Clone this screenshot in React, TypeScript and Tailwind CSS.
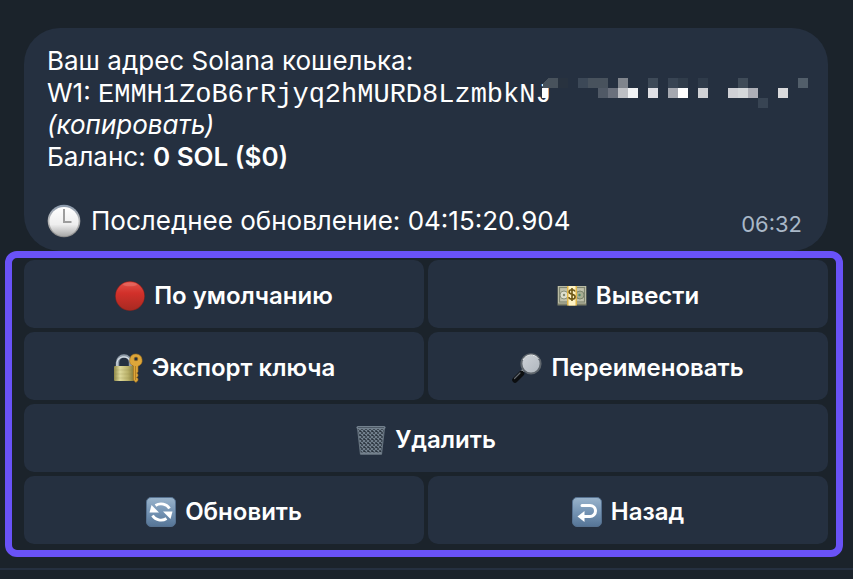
import type { ReactNode } from "react";

function ClockIcon() {
  return (
    <svg width="34" height="34" viewBox="0 0 34 34" aria-hidden="true" className="shrink-0">
      <defs>
        <linearGradient id="clockRim" x1="0" y1="0" x2="0" y2="1">
          <stop offset="0" stopColor="#8b9aad" />
          <stop offset="0.5" stopColor="#b9b9b9" />
          <stop offset="1" stopColor="#8a8a8a" />
        </linearGradient>
        <linearGradient id="clockFace" x1="0" y1="0" x2="0" y2="1">
          <stop offset="0" stopColor="#ffffff" />
          <stop offset="0.6" stopColor="#eeeeee" />
          <stop offset="1" stopColor="#a9a9a9" />
        </linearGradient>
      </defs>
      <circle cx="17" cy="17" r="16.3" fill="url(#clockRim)" />
      <circle cx="17" cy="17.6" r="14.6" fill="url(#clockFace)" />
      <path d="M17 5v13h7.500" fill="none" stroke="#9d9d9d" strokeWidth="2" />
    </svg>
  );
}

function RedCircleIcon() {
  return (
    <svg width="30" height="30" viewBox="0 0 30 30" aria-hidden="true">
      <defs>
        <linearGradient id="redBall" x1="0" y1="0" x2="0" y2="1">
          <stop offset="0" stopColor="#e0524a" />
          <stop offset="0.4" stopColor="#d2302a" />
          <stop offset="1" stopColor="#a82a22" />
        </linearGradient>
      </defs>
      <circle cx="15" cy="15" r="14.8" fill="#8f231d" />
      <circle cx="15" cy="15" r="14.2" fill="url(#redBall)" />
      <ellipse cx="15" cy="3.500" rx="7" ry="1.800" fill="#f08a80" opacity="0.4" />
    </svg>
  );
}

function MoneyIcon() {
  return (
    <svg width="30" height="30" viewBox="0 0 30 30" aria-hidden="true">
      <rect x="0.500" y="5" width="29" height="19.500" fill="#7d7f69" />
      <rect x="1" y="5" width="28" height="17.500" fill="#bfc0aa" />
      <rect x="2.500" y="6.500" width="25" height="14.500" fill="none" stroke="#808571" strokeWidth="1.200" />
      <circle cx="7" cy="14" r="4" fill="#dedfce" stroke="#8c927b" />
      <circle cx="23" cy="14" r="4" fill="#a8ad93" stroke="#7c856c" />
      <circle cx="7" cy="14" r="1.200" fill="#81886f" />
      <circle cx="22.500" cy="14" r="1.200" fill="#4b8a65" />
      <rect x="10" y="5" width="10" height="19.500" fill="#e0b64a" />
      <rect x="11.500" y="5" width="7" height="19.500" fill="#fff3c4" />
      <path d="M18 10.500c-.5-1.200-1.500-1.700-3-1.700-1.700 0-2.900.8-2.900 2.200 0 3.200 6 1.400 6 4.800 0 1.500-1.300 2.400-3.100 2.400-1.700 0-2.900-.7-3.200-2.100M15 7v13" fill="none" stroke="#6b5515" strokeWidth="1.600" />
    </svg>
  );
}

function LockKeyIcon() {
  return (
    <svg width="30" height="30" viewBox="0 0 30 30" aria-hidden="true">
      <defs>
        <linearGradient id="lockBody" x1="0" y1="0" x2="1" y2="0">
          <stop offset="0" stopColor="#8f8848" />
          <stop offset="0.3" stopColor="#ded99b" />
          <stop offset="0.7" stopColor="#b9b068" />
          <stop offset="1" stopColor="#857a38" />
        </linearGradient>
      </defs>
      <path d="M4.500 14V9.500a6.500 6.500 0 0 1 13 0V14" fill="none" stroke="#8e9aa6" strokeWidth="3.400" />
      <path d="M4 14V9.500a7 7 0 0 1 13 -2" fill="none" stroke="#d8e0e8" strokeWidth="1.200" />
      <rect x="1" y="13" width="20" height="15" rx="1" fill="url(#lockBody)" />
      <path d="M1.500 17h19M1.500 21h19M1.500 25h19" stroke="#8b8344" strokeWidth="0.500" opacity="0.400" />
      <path fillRule="evenodd" d="M23 1a6.300 6.300 0 0 0-2.500 12.100V27l2.300 2.500 2.200-2v-2l-1.500-1 1.500-1.200v-2l-1.300-1.200 1.300-1V13.200A6.300 6.300 0 0 0 23 1Zm0 3a1.900 1.900 0 1 1 0 3.800A1.900 1.900 0 0 1 23 4Z" fill="#dda63a" stroke="#a8741d" strokeWidth="0.600" />
      <path d="M22.500 13v14" stroke="#a8741d" strokeWidth="0.800" />
    </svg>
  );
}

function MagnifierIcon() {
  return (
    <svg width="30" height="30" viewBox="0 0 30 30" aria-hidden="true">
      <defs>
        <linearGradient id="lens" x1="0" y1="0" x2="1" y2="1">
          <stop offset="0" stopColor="#cfd3d8" />
          <stop offset="1" stopColor="#aeb5bd" />
        </linearGradient>
      </defs>
      <path d="M9.500 19 13 15.500" stroke="#aab0b6" strokeWidth="3" />
      <path d="M3 27 9.500 20.500" stroke="#0c0e10" strokeWidth="5.500" strokeLinecap="round" />
      <path d="M2.500 25.500 8 20" stroke="#63696f" strokeWidth="1.200" strokeLinecap="round" />
      <circle cx="19" cy="10.800" r="9.600" fill="url(#lens)" stroke="#5f666d" strokeWidth="2" />
      <path d="M11 7a9 9 0 0 1 15.500-1" fill="none" stroke="#f2f4f6" strokeWidth="1" />
    </svg>
  );
}

function TrashIcon() {
  return (
    <svg width="30" height="30" viewBox="0 0 30 30" aria-hidden="true">
      <defs>
        <pattern id="mesh" width="4" height="4" patternUnits="userSpaceOnUse">
          <rect width="4" height="4" fill="#29323c" />
          <path d="M0 0 4 4M4 0 0 4" stroke="#74828f" strokeWidth="1.100" />
        </pattern>
      </defs>
      <path d="M1.500 2.500h27l-3 26.500h-21Z" fill="url(#mesh)" stroke="#64717d" strokeWidth="1.200" />
      <path d="M4.500 28.500h21" stroke="#74818d" strokeWidth="2" />
      <rect x="0.500" y="1" width="29" height="3" rx="1.500" fill="#73818e" />
      <path d="M2 2.500h26" stroke="#46525e" strokeWidth="0.800" />
    </svg>
  );
}

function BlueTile({ id, children }: { id: string; children: ReactNode }) {
  return (
    <svg width="30" height="30" viewBox="0 0 30 30" aria-hidden="true">
      <defs>
        <linearGradient id={id} x1="0" y1="0" x2="0" y2="1">
          <stop offset="0" stopColor="#9ab4cc" />
          <stop offset="0.500" stopColor="#7594b4" />
          <stop offset="1" stopColor="#557496" />
        </linearGradient>
      </defs>
      <rect x="0.500" y="0.500" width="29" height="29" rx="4.500" fill={`url(#${id})`} stroke="#567190" />
      {children}
    </svg>
  );
}

function RefreshIcon() {
  return (
    <BlueTile id="refreshTile">
      <path d="M9.500 8.500A9.500 8.500 0 0 1 23.500 11.500" fill="none" stroke="#fff" strokeWidth="2.800" />
      <path d="M20.500 21.500A9.500 8.500 0 0 1 6.500 18.500" fill="none" stroke="#fff" strokeWidth="2.800" />
      <path d="M3.500 15.500 5.500 8 13 15.500Z" fill="#fff" />
      <path d="M26.500 14.500 24.500 22 17 14.500Z" fill="#fff" />
    </BlueTile>
  );
}

function ReturnIcon() {
  return (
    <BlueTile id="returnTile">
      <path d="M10 8.500H18a5.500 5.500 0 0 1 0 11h-6" fill="none" stroke="#fff" strokeWidth="3" strokeLinecap="round" />
      <path d="M5.500 19.500 12.500 14v11Z" fill="#fff" />
    </BlueTile>
  );
}

type Cell = [x: number, y: number, color: string];

const mosaic: Cell[] = [
  [16, 0, "#28323f"], [36, 0, "#3c4857"], [46, 0, "#48525d"], [56, 0, "#48525d"],
  [76, 0, "#80858d"], [106, 0, "#3e4a58"], [126, 0, "#384453"], [136, 0, "#303c4a"],
  [156, 0, "#2f3b4a"], [196, 0, "#3f4b58"], [256, 0, "#525e6a"],
  [56, 10, "#505966"], [66, 10, "#6a707c"], [76, 10, "#bdbfc4"], [86, 10, "#f1f2f4"],
  [106, 10, "#e0e0e5"], [126, 10, "#a5a8b0"], [136, 10, "#ffffff"], [156, 10, "#d0d1d5"],
  [186, 10, "#cfd0d5"], [196, 10, "#d5d8db"], [206, 10, "#adafb7"], [236, 10, "#dadadc"],
  [216, 20, "#384453"],
];

function AddressMosaic() {
  return (
    <svg width="266" height="30" viewBox="0 0 266 30" shapeRendering="crispEdges" aria-hidden="true" className="absolute top-[50px] left-[518px]">
      <path d="M6 0h10v10H1V5Z" fill="#48525c" />
      <rect x="0" y="10" width="6" height="10" fill="#ffffff" />
      {mosaic.map(([x, y, color]) => (
        <rect key={`${x}-${y}`} x={x} y={y} width="10" height="10" fill={color} />
      ))}
    </svg>
  );
}

function KeyboardButton({ icon, label, wide = false }: { icon: ReactNode; label: string; wide?: boolean }) {
  return (
    <button
      type="button"
      className={`flex h-[68px] items-center justify-center gap-[9px] rounded-[10px] bg-[#253040] pt-[3px] text-2xl font-semibold text-white ${wide ? "col-span-2" : ""}`}
    >
      {icon}
      <span>{label}</span>
    </button>
  );
}

export default function App() {
  return (
    <main className="min-h-screen bg-[#1b232b] pt-7 font-['Inter','Liberation_Sans',sans-serif] text-white">
      <article className="relative mr-[25px] ml-6 rounded-[36px] bg-[#253040] px-[23px] pt-[17px] pb-[14px] text-[26px] leading-8">
        <p>Ваш адрес Solana кошелька:</p>
        <p className="whitespace-nowrap">
          W1: <code className="font-['Liberation_Mono',monospace] text-[27px] leading-none">EMMH1ZoB6rRjyq2hMURD8LzmbkNJ</code>
        </p>
        <p className="italic">(копировать)</p>
        <p>
          Баланс: <strong className="font-semibold">0 SOL ($0)</strong>
        </p>
        <div className="mt-8 flex h-8 items-center gap-[10px]">
          <ClockIcon />
          <p className="whitespace-nowrap">Последнее обновление: 04:15:20.904</p>
          <time className="ml-auto pt-[6px] pr-[3px] text-[22px] text-[#a9b8c8]">06:32</time>
        </div>
        <AddressMosaic />
      </article>

      <section aria-label="Действия" className="mr-[10px] ml-[5px] rounded-xl border-[7px] border-[#6952f7] pt-[2px] pr-2 pb-[6px] pl-3">
        <div className="grid grid-cols-2 gap-1">
          <KeyboardButton icon={<RedCircleIcon />} label="По умолчанию" />
          <KeyboardButton icon={<MoneyIcon />} label="Вывести" />
          <KeyboardButton icon={<LockKeyIcon />} label="Экспорт ключа" />
          <KeyboardButton icon={<MagnifierIcon />} label="Переименовать" />
          <KeyboardButton icon={<TrashIcon />} label="Удалить" wide />
          <KeyboardButton icon={<RefreshIcon />} label="Обновить" />
          <KeyboardButton icon={<ReturnIcon />} label="Назад" />
        </div>
      </section>
      <hr className="mt-[11px] border-t-2 border-[#253040]" />
    </main>
  );
}
